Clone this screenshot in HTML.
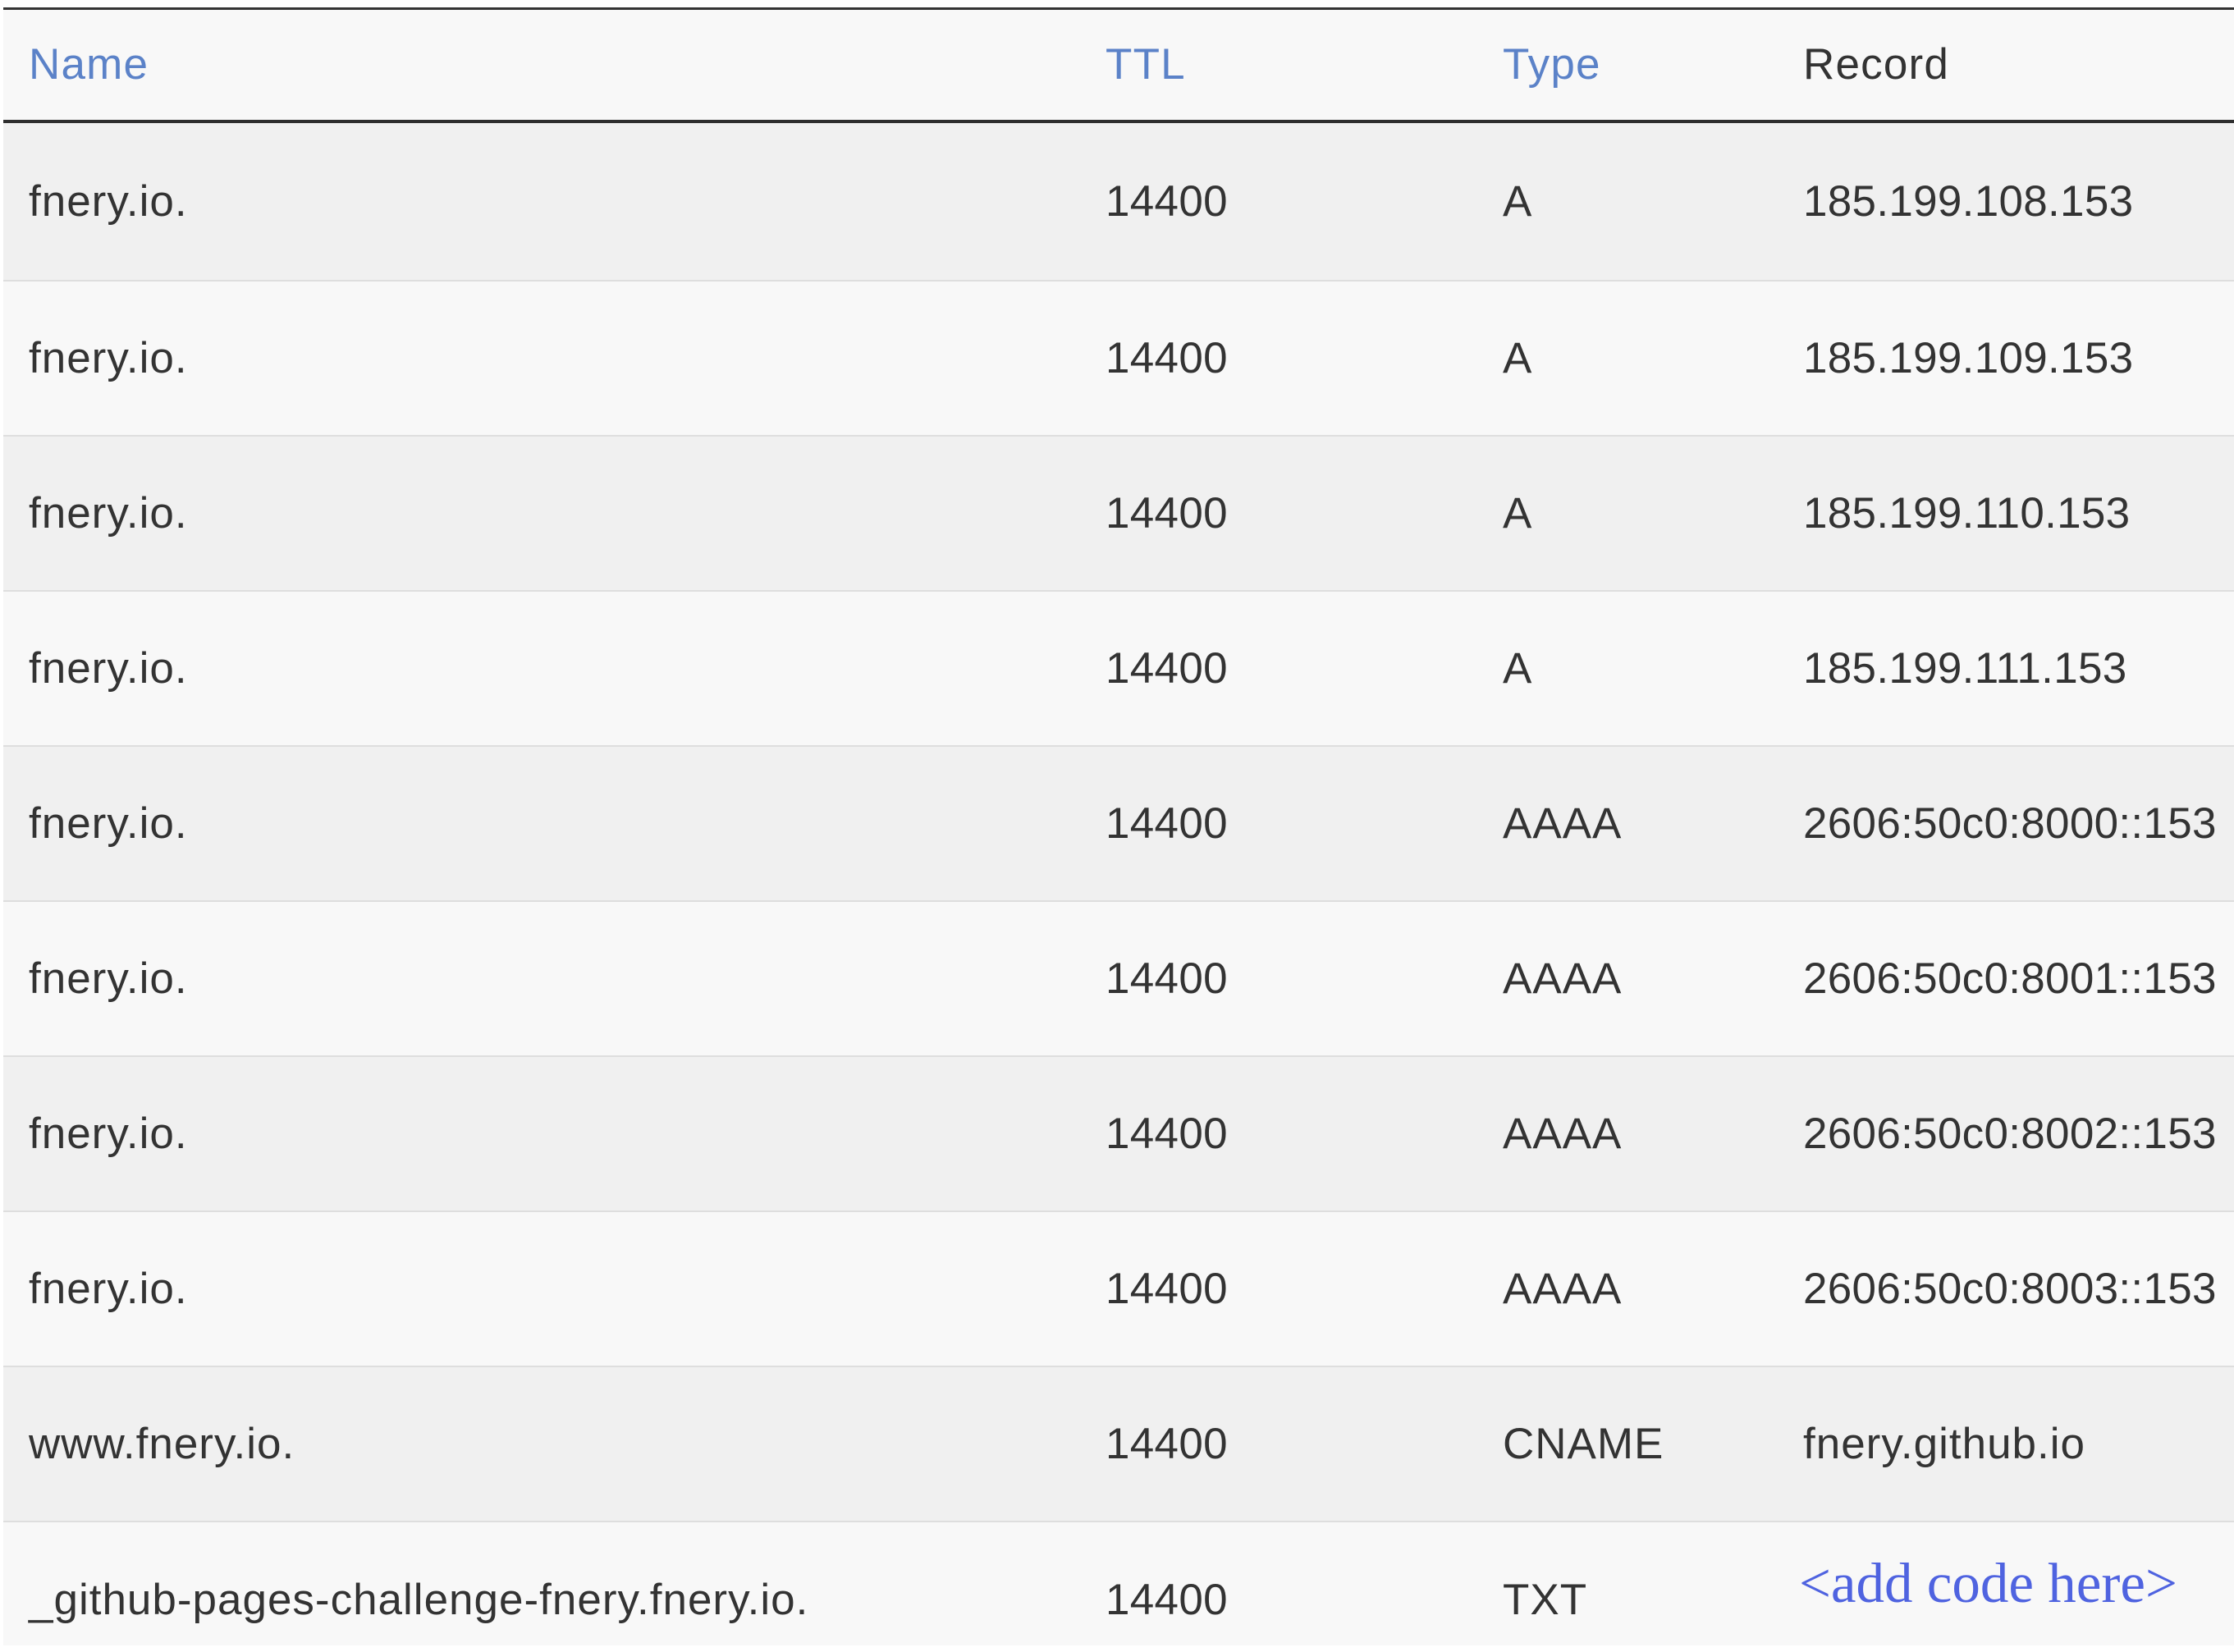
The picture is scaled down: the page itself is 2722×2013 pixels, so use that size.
<!DOCTYPE html>
<html><head><meta charset="utf-8"><style>
html,body{margin:0;padding:0;background:#fff;width:2722px;height:2013px;overflow:hidden;font-family:"Liberation Sans",sans-serif;}
.t{position:absolute;left:4px;width:2718px;}
.top{top:9px;height:3px;background:#333;}
.hd{top:12px;height:134px;background:#f8f8f8;line-height:134px;font-size:53px;letter-spacing:1.2px;}
.hl{top:146px;height:4px;background:#2e2e2e;}
.r{height:189px;line-height:189px;font-size:53px;letter-spacing:1px;color:#333;overflow:hidden;}
.r.o{background:#f0f0f0;}
.r.e{background:#f8f8f8;}
.sep{height:2px;background:#dedede;}
.c{position:absolute;top:0;white-space:nowrap;}
.c1{left:31px}.c2{left:1343px}.c3{left:1827px}.c4{left:2193px}
.n{letter-spacing:0.3px}
.blue{color:#5b82c8}
.add{font-family:"Liberation Serif",serif;color:#4f63e0;font-size:69px;letter-spacing:0;}
</style></head><body>
<div class="t top"></div>
<div class="t hd"><span class="c c1 blue">Name</span><span class="c c2 blue">TTL</span><span class="c c3 blue">Type</span><span class="c c4" style="color:#333">Record</span></div>
<div class="t hl"></div>
<div class="t r o" style="top:150px;height:192px;line-height:192px"><span class="c c1">fnery.io.</span><span class="c c2 n">14400</span><span class="c c3">A</span><span class="c c4 n">185.199.108.153</span></div>
<div class="t sep" style="top:341px"></div>
<div class="t r e" style="top:343px;height:187px;line-height:187px"><span class="c c1">fnery.io.</span><span class="c c2 n">14400</span><span class="c c3">A</span><span class="c c4 n">185.199.109.153</span></div>
<div class="t sep" style="top:530px"></div>
<div class="t r o" style="top:532px;height:187px;line-height:187px"><span class="c c1">fnery.io.</span><span class="c c2 n">14400</span><span class="c c3">A</span><span class="c c4 n">185.199.110.153</span></div>
<div class="t sep" style="top:719px"></div>
<div class="t r e" style="top:721px;height:187px;line-height:187px"><span class="c c1">fnery.io.</span><span class="c c2 n">14400</span><span class="c c3">A</span><span class="c c4 n">185.199.111.153</span></div>
<div class="t sep" style="top:908px"></div>
<div class="t r o" style="top:910px;height:187px;line-height:187px"><span class="c c1">fnery.io.</span><span class="c c2 n">14400</span><span class="c c3">AAAA</span><span class="c c4 n">2606:50c0:8000::153</span></div>
<div class="t sep" style="top:1097px"></div>
<div class="t r e" style="top:1099px;height:187px;line-height:187px"><span class="c c1">fnery.io.</span><span class="c c2 n">14400</span><span class="c c3">AAAA</span><span class="c c4 n">2606:50c0:8001::153</span></div>
<div class="t sep" style="top:1286px"></div>
<div class="t r o" style="top:1288px;height:187px;line-height:187px"><span class="c c1">fnery.io.</span><span class="c c2 n">14400</span><span class="c c3">AAAA</span><span class="c c4 n">2606:50c0:8002::153</span></div>
<div class="t sep" style="top:1475px"></div>
<div class="t r e" style="top:1477px;height:187px;line-height:187px"><span class="c c1">fnery.io.</span><span class="c c2 n">14400</span><span class="c c3">AAAA</span><span class="c c4 n">2606:50c0:8003::153</span></div>
<div class="t sep" style="top:1664px"></div>
<div class="t r o" style="top:1666px;height:187px;line-height:187px"><span class="c c1">www.fnery.io.</span><span class="c c2 n">14400</span><span class="c c3">CNAME</span><span class="c c4">fnery.github.io</span></div>
<div class="t sep" style="top:1853px"></div>
<div class="t r e" style="top:1855px;height:150px;line-height:189px"><span class="c c1">_github-pages-challenge-fnery.fnery.io.</span><span class="c c2 n">14400</span><span class="c c3">TXT</span><span class="c add" style="left:2188px;top:-20px">&lt;add code here&gt;</span></div>
</body></html>
